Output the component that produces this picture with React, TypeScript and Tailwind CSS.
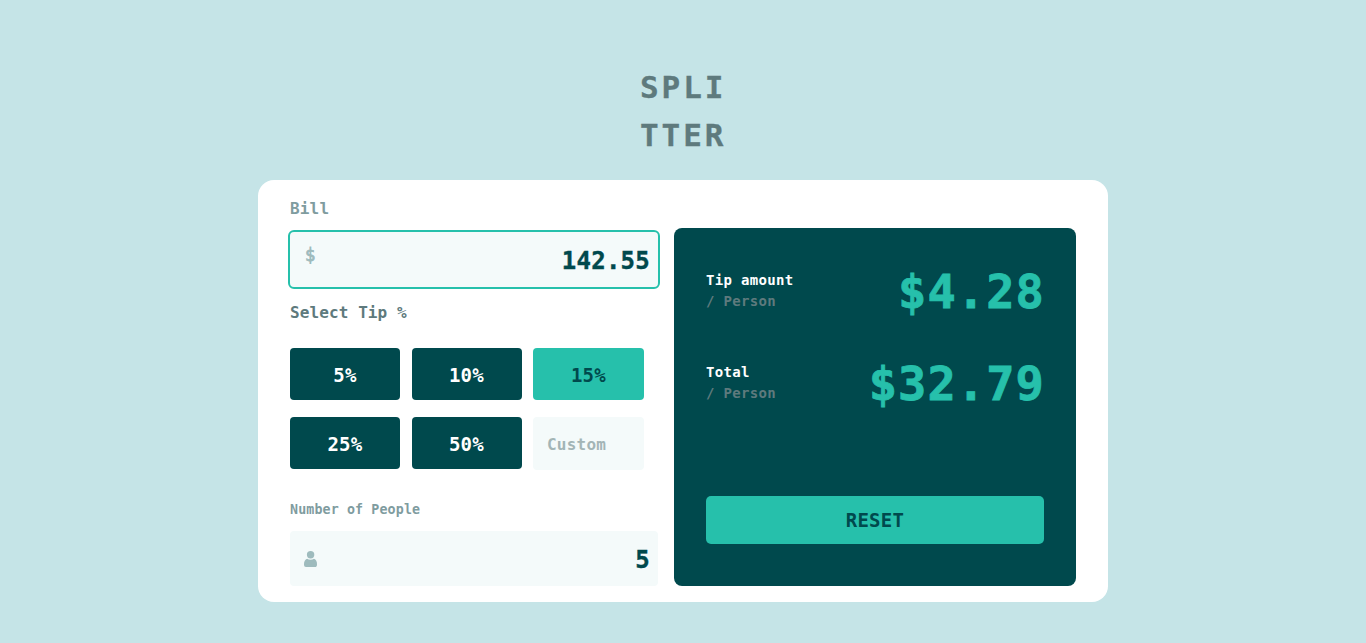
import { useState } from "react";

const TIPS = [5, 10, 15, 25, 50];

function Result({ label, value }: { label: string; value: string }) {
  return (
    <div className="flex h-[72px] items-center justify-between">
      <div className="text-[14px] leading-[21px] tracking-[0.33px]">
        <p className="text-white">{label}</p>
        <p className="text-[#5e7a7d]">/ Person</p>
      </div>
      <p className="-mr-px pt-[2px] text-[47px] leading-[72px] tracking-[1.08px] text-[#26c0ab] [-webkit-text-stroke:0.8px_#26c0ab]">
        {value}
      </p>
    </div>
  );
}

export default function App() {
  const [tip, setTip] = useState(15);

  return (
    <div className="flex min-h-[643px] flex-col items-center bg-[#c5e4e7] font-['DejaVu_Sans_Mono',monospace] font-bold">
      <h1 className="mt-[63px] h-[117px] w-[86px] whitespace-pre text-[31px] leading-[48px] tracking-[2.95px] text-[#5e7a7d] [-webkit-text-stroke:0.3px_#5e7a7d]">
        {"SPLI\nTTER"}
      </h1>
      <main className="flex h-[422px] w-[850px] gap-4 rounded-[16px] bg-white px-8 pb-4">
        <section className="flex w-[368px] flex-col">
          <label className="h-[52px] pt-[17px] text-[16px] leading-6 tracking-[0.16px] text-[#7f9c9f]">Bill</label>
          <div className="flex h-[55px] shrink-0 items-center justify-between rounded-[4px] bg-[#f4fafa] pl-[14px] pr-[8px] text-[#00494d] outline-2 outline-[#26c0ab]">
            <span className="-mt-[8px] w-3 text-center text-[17px] font-normal text-[#9ebbbd] [-webkit-text-stroke:0.8px_#9ebbbd]">
              $
            </span>
            <span className="pt-[2px] text-[24px] leading-9 tracking-[0.24px] [-webkit-text-stroke:0.4px_#00494d]">
              142.55
            </span>
          </div>
          <h2 className="mt-[14px] h-[47px] text-[16px] leading-6 tracking-[0.1px] text-[#5e7a7d]">Select Tip %</h2>
          <div className="grid w-[354px] grid-cols-[110px_110px_111px] gap-x-[11.5px] gap-y-[17px] text-[19px] leading-[50px] tracking-[0.3px]">
            {TIPS.map((n) => (
              <button
                key={n}
                onClick={() => setTip(n)}
                className={
                  n === tip
                    ? "h-[52px] rounded-[4px] bg-[#26c0ab] pt-[2px] text-[#00494d]"
                    : "h-[52px] rounded-[4px] bg-[#00494d] pt-[2px] text-white"
                }
              >
                {n}%
              </button>
            ))}
            <div className="h-[53px] rounded-[4px] bg-[#f4fafa] pl-[14px] text-[16px] leading-[56px] tracking-[0.24px] text-[#a3b5b6]">
              Custom
            </div>
          </div>
          <label className="mt-[29px] h-[32px] pt-px text-[13.3px] leading-5 tracking-[0.13px] text-[#7f9c9f]">
            Number of People
          </label>
          <div className="flex h-[55px] shrink-0 items-center justify-between rounded-[4px] bg-[#f4fafa] pl-[14px] pr-[8px] text-[#00494d]">
            <svg width="13" height="16" viewBox="0 0 13 16" fill="#9ebbbd">
              <circle cx="6.6" cy="3.7" r="3.7" />
              <path d="M3.1 7.7C4.9 9.1 8.2 9.1 10 7.7C12 8.4 13 10.3 13 13.2C13 15.1 12.6 16 11 16H2Q0 16 0 14V13.2C0 10.3 1.1 8.4 3.1 7.7Z" />
            </svg>
            <span className="pt-[2px] text-[24px] leading-9 tracking-[0.24px] [-webkit-text-stroke:0.4px_#00494d]">
              5
            </span>
          </div>
        </section>
        <section className="mt-12 flex w-[402px] flex-col rounded-[8px] bg-[#00494d] px-8 pt-[27px]">
          <Result label="Tip amount" value="$4.28" />
          <div className="h-5" />
          <Result label="Total" value="$32.79" />
          <button className="mt-[77px] h-12 rounded-[5px] bg-[#26c0ab] text-[19px] tracking-[0.3px] text-[#00494d]">
            RESET
          </button>
        </section>
      </main>
    </div>
  );
}
